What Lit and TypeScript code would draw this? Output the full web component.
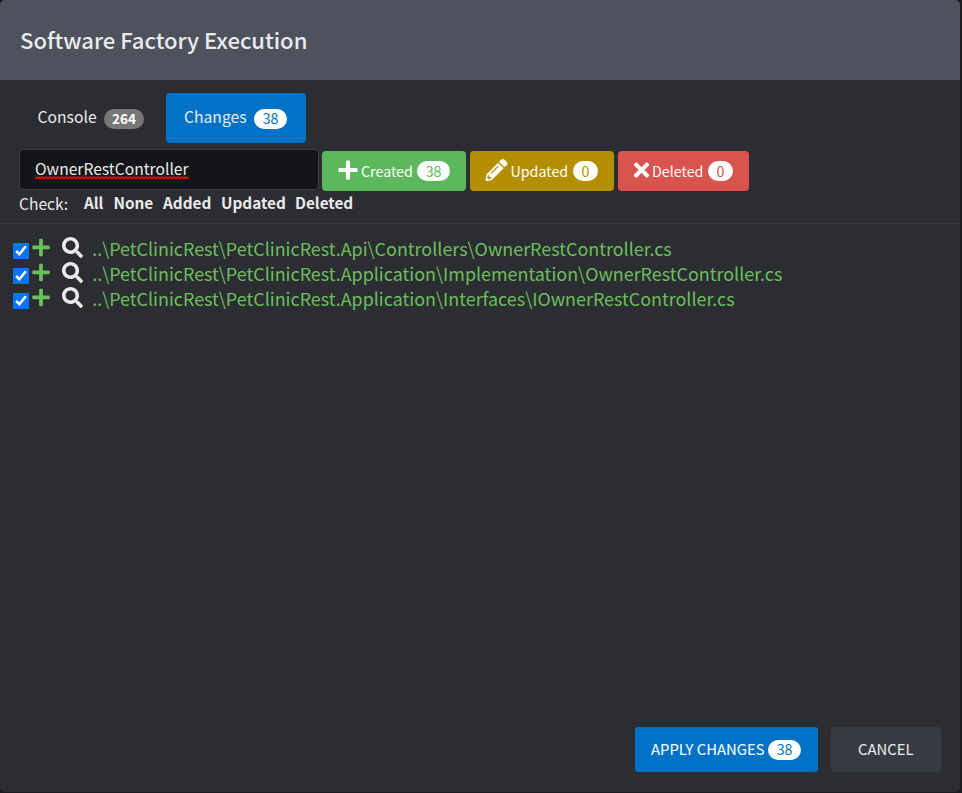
import { LitElement, html, css, svg } from "lit";
import { customElement, property, state } from "lit/decorators.js";

const icons = {
  plus: svg`<path d="M416 208H272V64c0-17.7-14.3-32-32-32h-32c-17.7 0-32 14.3-32 32v144H32c-17.7 0-32 14.3-32 32v32c0 17.7 14.3 32 32 32h144v144c0 17.7 14.3 32 32 32h32c17.7 0 32-14.3 32-32V304h144c17.7 0 32-14.3 32-32v-32c0-17.7-14.3-32-32-32z"/>`,
  pencil: svg`<path d="M497.9 142.1l-46.1 46.1c-4.7 4.7-12.3 4.7-17 0l-111-111c-4.7-4.7-4.7-12.3 0-17l46.1-46.1c18.7-18.7 49.1-18.7 67.9 0l60.1 60.1c18.8 18.7 18.8 49.1 0 67.9zM284.2 99.8L21.6 362.4.4 483.9c-2.9 16.4 11.4 30.6 27.8 27.8l121.5-21.3 262.6-262.6c4.7-4.7 4.7-12.3 0-17l-111-111c-4.8-4.7-12.4-4.7-17.1 0zM124.1 339.9c-5.5-5.5-5.5-14.3 0-19.8l154-154c5.5-5.5 14.3-5.5 19.8 0s5.5 14.3 0 19.8l-154 154c-5.5 5.5-14.3 5.5-19.8 0zM88 424h48v36.3l-64.5 11.3-31.1-31.1L51.7 376H88v48z"/>`,
  times: svg`<path d="M242.7 256l100.1-100.1c12.3-12.3 12.3-32.2 0-44.5l-22.2-22.2c-12.3-12.3-32.2-12.3-44.5 0L176 189.3 75.9 89.2c-12.3-12.3-32.2-12.3-44.5 0L9.2 111.5c-12.3 12.3-12.3 32.2 0 44.5L109.3 256 9.2 356.1c-12.3 12.3-12.3 32.2 0 44.5l22.2 22.2c12.3 12.3 32.2 12.3 44.5 0L176 322.7l100.1 100.1c12.3 12.3 32.2 12.3 44.5 0l22.2-22.2c12.3-12.3 12.3-32.2 0-44.5L242.7 256z"/>`,
  search: svg`<path d="M505 442.7L405.3 343c-4.5-4.5-10.6-7-17-7H372c27.6-35.3 44-79.7 44-128C416 93.1 322.9 0 208 0S0 93.1 0 208s93.1 208 208 208c48.3 0 92.7-16.4 128-44v16.3c0 6.4 2.5 12.5 7 17l99.7 99.7c9.4 9.4 24.6 9.4 33.9 0l28.3-28.3c9.4-9.4 9.4-24.6.1-34zM208 328c-66 0-120-54-120-120 0-66 54-120 120-120 66 0 120 54 120 120 0 66-54 120-120 120z"/>`,
};

@customElement("file-row")
class FileRow extends LitElement {
  @property() path = "";
  static styles = css`
    :host { display: flex; height: 25px; }
    input { width: 16px; height: 16px; margin: 7px 0 0; flex: none; }
    svg { flex: none; }
    .add { width: 18px; height: 20px; margin: 2px 0 0 3px; fill: #6abf5b; }
    .search { width: 21px; height: 21px; margin: 1px 0 0 12.300px; fill: #ebebeb; }
    .path {
      margin-left: 8.900px; color: #6abf5b; white-space: pre;
      font-size: 17.930px; line-height: 25px; height: 25px;
    }
  `;
  render() {
    return html`<input type="checkbox" checked aria-label="Include file" />
      <svg class="add" viewBox="0 16 448 512">${icons.plus}</svg>
      <svg class="search" viewBox="0 0 512 512">${icons.search}</svg>
      <span class="path">${this.path}</span>`;
  }
}

@customElement("app-root")
class AppRoot extends LitElement {
  @state() files = [
    "..\\PetClinicRest\\PetClinicRest.Api\\Controllers\\OwnerRestController.cs",
    "..\\PetClinicRest\\PetClinicRest.Application\\Implementation\\OwnerRestController.cs",
    "..\\PetClinicRest\\PetClinicRest.Application\\Interfaces\\IOwnerRestController.cs",
  ];

  static styles = css`
    :host {
      display: block; height: 793px; box-sizing: border-box; padding: 0 2px 1px 0;
      background: #1b1c1f; color: #ebebeb;
      font-family: "Noto Sans CJK SC", "Noto Sans", sans-serif; font-size: 15px;
    }
    * { box-sizing: border-box; }
    .dialog {
      height: 792px; background: #2c2d32; border-radius: 5px; overflow: hidden;
      display: flex; flex-direction: column;
    }
    header {
      flex: none; height: 80px; padding-left: 20px; background: #4e525d;
      font-size: 22.050px; line-height: 78px; font-weight: 500; white-space: nowrap;
    }
    .tabs { display: flex; height: 50px; margin: 13px 0 0 20px; }
    .tab {
      display: flex; padding: 13px 0 0 18px; height: 50px; border-radius: 4px;
      line-height: 22px; font-size: 15.700px; white-space: nowrap;
    }
    .tab.console { width: 146px; padding-left: 17.500px; }
    .tab.changes { width: 140px; background: #0072c6; }
    .badge {
      display: flex; align-items: center; justify-content: center; height: 20px;
      border-radius: 10px; background: #fff; font-size: 14.200px; line-height: 18px;
      padding-bottom: 1px; flex: none;
    }
    .blue { color: #0072c6; }
    .tab .badge { margin-top: 3px; padding-bottom: 2px; }
    .w33 { width: 33px; }
    .w25 { width: 25px; }
    .w40 { width: 40px; background: #777; color: #fff; font-weight: 700; font-size: 13.500px; }
    .name { flex: none; }
    .tab .name { width: 70px; }
    .console .name { width: 66.500px; }
    .filters { display: flex; height: 41px; margin: 6px 0 0 19px; }
    .field {
      width: 300px; height: 41px; border: 1px solid #393b41; border-radius: 4px;
      background: #141518; padding-left: 15px; line-height: 37px; font-size: 15.650px;
      white-space: nowrap;
    }
    .typo { position: relative; display: inline-block; }
    .typo svg { position: absolute; left: 0; top: 26px; width: 154px; height: 4px; }
    .filter {
      display: flex; height: 40px; margin: 2px 0 0 4px; border-radius: 4px; color: #fff;
      font-size: 14.250px; line-height: 40px; white-space: nowrap;
    }
    .filter .badge { margin-top: 10px; }
    .filter svg { fill: #fff; flex: none; height: 22px; margin-top: 8px; }
    .created { width: 144px; background: #5cb85c; margin-left: 3px; padding-left: 16px; }
    .created svg { width: 20px; margin-right: 3px; }
    .created .name { width: 56px; }
    .updated { width: 144px; background: #b38f00; padding-left: 15px; }
    .updated svg { width: 23px; margin-right: 2.500px; }
    .updated .name { width: 62.500px; }
    .deleted { width: 131px; background: #d9534f; padding-left: 15px; }
    .deleted svg { width: 17px; margin-right: 2px; }
    .deleted .name { width: 56px; }
    .green { color: #5cb85c; }
    .gold { color: #b38f00; }
    .red { color: #d9534f; }
    .checks {
      display: flex; height: 34px; padding-left: 19px; border-bottom: 1px solid #393a40;
      line-height: 25px; font-size: 15.300px; white-space: nowrap;
    }
    .checks span { width: 65px; padding-top: 1px; font-size: 15.600px; }
    .checks b { font-weight: 700; flex: none; }
    .all { width: 29.500px; }
    .none { width: 49.500px; }
    .added { width: 58px; }
    .upd { width: 74px; }
    .files { flex: 1; padding: 12px 0 0 13px; }
    footer {
      flex: none; height: 76px; border-top: 1px solid #27282c; padding: 10px 19px 0 0;
      display: flex; justify-content: flex-end; gap: 13px;
    }
    .btn {
      display: flex; height: 45px; border-radius: 3px; line-height: 44px;
      font-size: 14.850px; color: #fff; white-space: nowrap;
    }
    .apply { width: 183px; padding-left: 16px; background: #0072c6; }
    .apply .name { width: 117px; }
    .apply .badge { margin-top: 13px; padding-bottom: 2px; }
    .cancel { width: 110px; padding-left: 27px; background: #383a42; color: #ebebeb; }
  `;

  render() {
    return html`
      <div class="dialog">
        <header><span>Software Factory Execution</span></header>
        <nav class="tabs">
          <div class="tab console"><span class="name">Console</span><span class="badge w40">264</span></div>
          <div class="tab changes"><span class="name">Changes</span><span class="badge w33 blue">38</span></div>
        </nav>
        <div class="filters">
          <div class="field"><span class="typo">OwnerRestController<svg viewBox="0 0 154 4">
            <defs><pattern id="wave" width="4" height="4" patternUnits="userSpaceOnUse"><path d="M-1 1L1 2.500 3 1 5 2.500" fill="none" stroke="#f00000" stroke-width="1.600"/></pattern></defs>
            <rect width="154" height="4" fill="url(#wave)"/></svg></span></div>
          <div class="filter created"><svg viewBox="0 0 448 512">${icons.plus}</svg><span class="name">Created</span><span class="badge w33 green">38</span></div>
          <div class="filter updated"><svg viewBox="0 0 512 512">${icons.pencil}</svg><span class="name">Updated</span><span class="badge w25 gold">0</span></div>
          <div class="filter deleted"><svg viewBox="0 0 352 512">${icons.times}</svg><span class="name">Deleted</span><span class="badge w25 red">0</span></div>
        </div>
        <div class="checks">
          <span>Check:</span><b class="all">All</b><b class="none">None</b><b class="added">Added</b><b class="upd">Updated</b><b>Deleted</b>
        </div>
        <main class="files">${this.files.map((f) => html`<file-row .path=${f}></file-row>`)}</main>
        <footer>
          <div class="btn apply"><span class="name">APPLY CHANGES</span><span class="badge w33 blue">38</span></div>
          <div class="btn cancel">CANCEL</div>
        </footer>
      </div>
    `;
  }
}
